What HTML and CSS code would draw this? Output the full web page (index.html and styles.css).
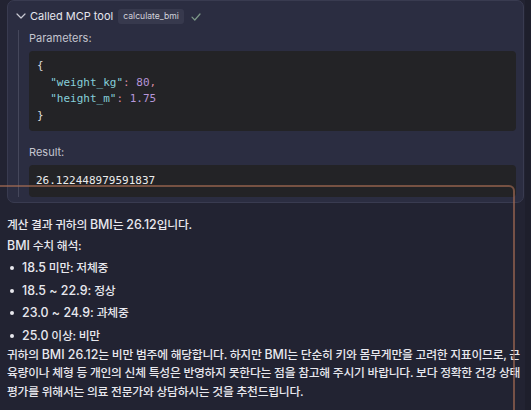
FILE: index.html
```html
<!DOCTYPE html>
<html lang="ko">
<head>
<meta charset="utf-8">
<link rel="stylesheet" href="styles.css">
</head>
<body>
<div class="page">
  <div class="tool-card">
    <div class="tool-head">
      <svg class="chev" width="10" height="6" viewBox="0 0 10 6"><path d="M1 1 L5 5 L9 1" fill="none" stroke="#c9cad3" stroke-width="1.2" stroke-linecap="round" stroke-linejoin="round"/></svg>
      <span class="tool-title">Called MCP tool</span>
      <span class="badge">calculate_bmi</span>
      <svg class="check" width="10" height="8" viewBox="0 0 10 8"><path d="M1 4.2 L3.8 7 L9 1" fill="none" stroke="#7d9888" stroke-width="1.2" stroke-linecap="round" stroke-linejoin="round"/></svg>
    </div>
    <div class="tool-body">
      <div class="label">Parameters:</div>
      <pre class="code"><span class="p">{</span>
  <span class="k">"weight_kg"</span><span class="c">:</span> <span class="n">80</span><span class="c">,</span>
  <span class="k">"height_m"</span><span class="c">:</span> <span class="n">1.75</span>
<span class="p">}</span></pre>
      <div class="label result-label">Result:</div>
      <pre class="code result">26.122448979591837</pre>
    </div>
  </div>

  <div class="answer">
    <p class="line first">계산 결과 귀하의 <span class="en">BMI</span>는 <span class="en">26.12</span>입니다.</p>
    <p class="line"><span class="en">BMI</span> 수치 해석:</p>
    <ul class="bullets">
      <li><span class="en">18.5</span> 미만: 저체중</li>
      <li><span class="en">18.5 ~ 22.9:</span> 정상</li>
      <li><span class="en">23.0 ~ 24.9:</span> 과체중</li>
      <li><span class="en">25.0</span> 이상: 비만</li>
    </ul>
    <p class="para">귀하의 <span class="en">BMI 26.12</span>는 비만 범주에 해당합니다. 하지만 <span class="en">BMI</span>는 단순히 키와 몸무게만을 고려한 지표이므로, 근육량이나 체형 등 개인의 신체 특성은 반영하지 못한다는 점을 참고해 주시기 바랍니다. 보다 정확한 건강 상태 평가를 위해서는 의료 전문가와 상담하시는 것을 추천드립니다.</p>
  </div>

  <div class="focus-ring"></div>
  <div class="edge"></div>
</div>
</body>
</html>
```

FILE: styles.css
```css
* { box-sizing: border-box; }
html, body {
  margin: 0;
  padding: 0;
  background: #222332;
  height: 100%;
  overflow: hidden;
}
body {
  font-family: "Inter", "Noto Sans CJK KR", sans-serif;
  color: #e6e6ec;
}
.page {
  position: relative;
  width: 531px;
  height: 410px;
  padding: 0 7px;
  overflow: hidden;
}
.tool-card {
  width: 517px;
  background: #2b2d41;
  border: 1px solid #393b50;
  border-radius: 7px;
  padding-bottom: 5px;
}
.tool-head {
  height: 29px;
  display: flex;
  align-items: center;
  padding-left: 8px;
  padding-top: 1px;
}
.chev { margin-right: 4px; }
.tool-title {
  font-size: 11px;
  font-weight: 400;
  color: #e6e6ee;
  margin-right: 5px;
}
.badge {
  font-size: 8.6px;
  font-weight: 400;
  color: #d2d3db;
  background: #37394d;
  border-radius: 3px;
  padding: 1px 5px;
  height: 15px;
  line-height: 13px;
  margin-right: 7px;
}
.check { margin-top: 1px; }
.tool-body {
  margin-left: 10px;
  margin-right: 7px;
  border-left: 1px solid #45475b;
  padding-left: 10px;
}
.label {
  font-size: 11px;
  color: #c4c5cf;
  line-height: 16px;
  height: 16px;
}
.code {
  margin: 5px 0 0 0;
  background: #232326;
  border-radius: 4px;
  padding: 7px 8px;
  font-family: "DejaVu Sans Mono", monospace;
  font-size: 11px;
  line-height: 16.6px;
  color: #dcdcdc;
  height: 80px;
}
.code .k { color: #86cfd9; }
.code .n { color: #b696d8; }
.code .c { color: #d98aa0; }
.code .p { color: #dcdcdc; }
.result-label { margin-top: 13px; }
.code.result {
  height: 32px;
  padding: 8px 7px;
  line-height: 16px;
  color: #ececec;
}
.answer {
  font-size: 11.8px;
  font-weight: 500;
  letter-spacing: -0.25px;
  line-height: 18px;
  color: #e8e8ee;
}
.en {
  font-size: 12.4px;
  letter-spacing: 0;
}
.line { margin: 0; height: 18px; }
.line.first { margin-top: 13px; margin-bottom: 3px; }
.bullets {
  list-style: none;
  margin: 4px 0 0 0;
  padding: 0;
  display: flex;
  flex-direction: column;
  gap: 4.5px;
}
.bullets li {
  position: relative;
  height: 18px;
  padding-left: 15px;
}
.bullets li::before {
  content: "";
  position: absolute;
  left: 3px;
  top: 7px;
  width: 4px;
  height: 4px;
  border-radius: 50%;
  background: #e8e8ee;
}
.para {
  margin: 1px 0 0 0;
  line-height: 18.5px;
}
.focus-ring {
  position: absolute;
  left: -10px;
  top: 185px;
  width: 525px;
  height: 225px;
  border-top: 2px solid rgba(170, 110, 85, 0.62);
  border-right: 2px solid rgba(170, 110, 85, 0.62);
  border-top-right-radius: 6px;
  pointer-events: none;
}
.edge {
  position: absolute;
  right: 0;
  top: 0;
  width: 6px;
  height: 410px;
  background: #1e1f2c;
}
```
